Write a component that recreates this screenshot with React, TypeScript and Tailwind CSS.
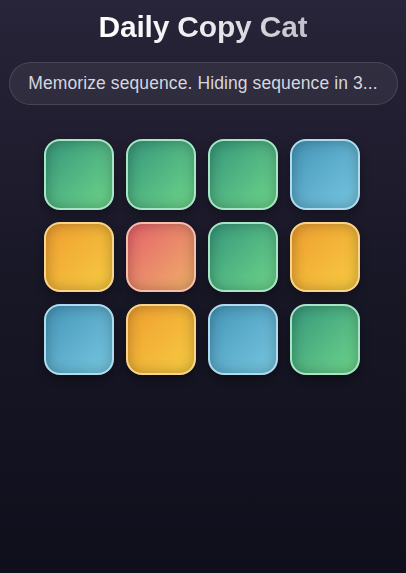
import React from "react";

type C = "g" | "b" | "y" | "r";

const cls: Record<C, string> = {
  g: "bg-gradient-to-br from-[#36977a] to-[#6ed68a] border-[#a6e6c6]",
  b: "bg-gradient-to-br from-[#4595b8] to-[#78c8e2] border-[#aedcef]",
  y: "bg-gradient-to-br from-[#ee9e30] to-[#f7cc42] border-[#f9d48a]",
  r: "bg-gradient-to-br from-[#e3606a] to-[#eeb068] border-[#f6bcac]",
};

const tiles: C[] = ["g", "g", "g", "b", "y", "r", "g", "y", "b", "y", "b", "g"];

export default function App() {
  return (
    <div
      className="w-[406px] h-[573px] bg-gradient-to-b from-[#282439] via-[#181726] to-[#0f0f1c] flex flex-col items-center overflow-hidden"
      style={{ fontFamily: '"Liberation Sans", Arial, sans-serif' }}
    >
      <h1 className="mt-[8px] text-[30px] leading-[38px] font-bold tracking-[-0.2px] bg-gradient-to-r from-[#ffffff] via-[#ececf0] to-[#c2c2ca] bg-clip-text text-transparent">
        Daily Copy Cat
      </h1>
      <div className="mt-[16px] w-[389px] h-[43px] rounded-full border border-[rgba(255,255,255,0.12)] bg-[rgba(255,255,255,0.06)] flex items-center justify-center">
        <span className="text-[17.5px] text-[#d6d6de] tracking-[0.1px]">
          Memorize sequence. Hiding sequence in 3...
        </span>
      </div>
      <div className="mt-[34px] grid grid-cols-4 gap-x-[11.5px] gap-y-[12px] mr-[2px]">
        {tiles.map((t, i) => (
          <div
            key={i}
            className={`w-[70.5px] h-[70.5px] rounded-[16px] border-2 ${cls[t]} shadow-[inset_0_0_14px_rgba(0,0,0,0.28),0_4px_10px_rgba(0,0,0,0.35)]`}
          />
        ))}
      </div>
    </div>
  );
}
